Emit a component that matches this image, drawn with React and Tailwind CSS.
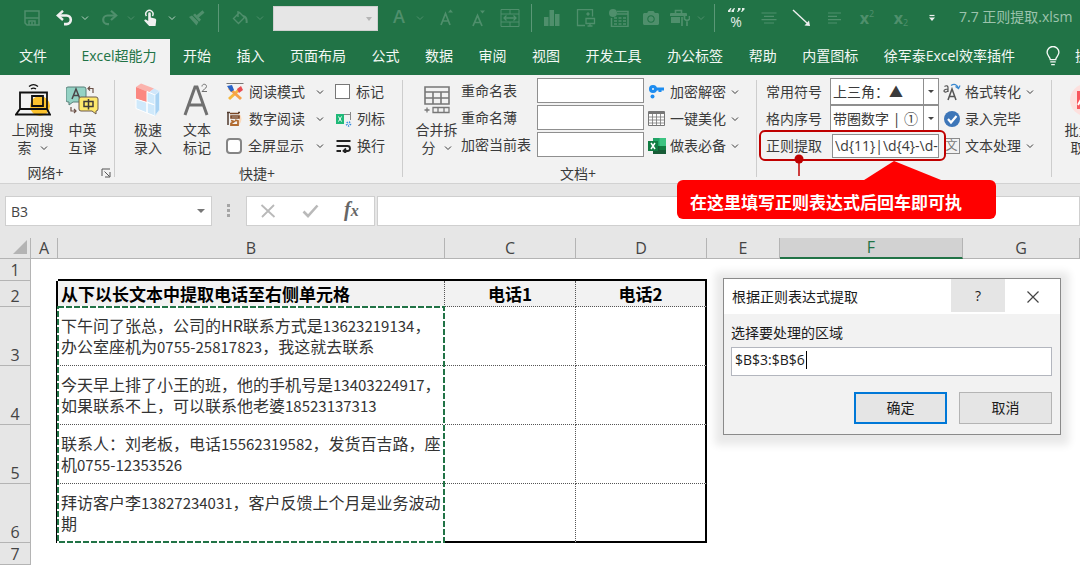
import { Fragment } from "react";
import { FaCamera } from "react-icons/fa";

const TABS = ["开始", "插入", "页面布局", "公式", "数据", "审阅", "视图", "开发工具", "办公标签", "帮助", "内置图标", "徐军泰Excel效率插件"];

const ROWS = [
  { n: 3, lines: ["下午问了张总，公司的HR联系方式是13623219134，", "办公室座机为0755-25817823，我这就去联系"] },
  { n: 4, lines: ["今天早上排了小王的班，他的手机号是13403224917，", "如果联系不上，可以联系他老婆18523137313"] },
  { n: 5, lines: ["联系人：刘老板，电话15562319582，发货百吉路，座", "机0755-12353526"] },
  { n: 6, lines: ["拜访客户李13827234031，客户反馈上个月是业务波动", "期"] },
];

function Chevron({ className = "" }) {
  return (
    <svg viewBox="0 0 8 8" className={`w-2 h-2 shrink-0 ${className}`} fill="none" stroke="currentColor">
      <path d="M1 2.5l3 3 3-3" />
    </svg>
  );
}

function Svg({ w, h, className = "", children }) {
  return (
    <svg viewBox={`0 0 ${w} ${h}`} width={w} height={h} fill="none" stroke="currentColor" className={`shrink-0 ${className}`}>
      {children}
    </svg>
  );
}

/* ---------- quick access bar ---------- */

function QuickButton({ label, className, children }) {
  return (
    <button aria-label={label} className={`flex shrink-0 items-center justify-center ${className}`}>
      {children}
    </button>
  );
}

function QuickAccess() {
  const sep = "w-px h-7 shrink-0 bg-[#5b9877]";
  return (
    <div className="flex h-9 items-center pl-6 text-[#4f8f6c] overflow-hidden">
      <QuickButton label="保存" className="w-4">
        <Svg w={16} h={16}>
          <path d="M1 1h14v14H3l-2-2z" strokeWidth="1.5" />
          <path d="M1 8h14M5 15v-4h6v4M8 12v3" strokeWidth="1.5" />
        </Svg>
      </QuickButton>
      <QuickButton label="撤消" className="w-[18px] ml-4 text-[#f0f0f0]">
        <Svg w={18} h={16}>
          <path d="M3 5.5h7.5a4.3 4.3 0 0 1 0 8.6H8" strokeWidth="2.6" />
          <path d="M7 0.8L1.8 5.5 7 10" strokeWidth="2.4" />
        </Svg>
      </QuickButton>
      <Chevron className="ml-[7px] text-[#b8d2c4]" />
      <QuickButton label="恢复" className="w-[18px] ml-[11px]">
        <Svg w={18} h={16}>
          <path d="M15 5.5H7.5a4.3 4.3 0 0 0 0 8.6H9" strokeWidth="2.2" />
          <path d="M11 0.8l5.2 4.7L11 10" strokeWidth="2.2" />
        </Svg>
      </QuickButton>
      <Chevron className="ml-[9px]" />
      <QuickButton label="触摸/鼠标模式" className="w-4 ml-2 text-[#f0f0f0]">
        <Svg w={16} h={18}>
          <path d="M3.4 7a3.6 3.6 0 1 1 6 0" strokeWidth="1.5" />
          <path d="M5.2 4.5a1.3 1.3 0 0 1 2.6 0v4l4 .9c1 .3 1.6 1 1.4 2L12.5 17H6.2L1.5 12c-.8-1 .6-2 1.6-1.3l2.1 1.3z" fill="currentColor" stroke="none" />
        </Svg>
      </QuickButton>
      <Chevron className="ml-[9px] text-[#b8d2c4]" />
      <QuickButton label="格式刷" className="w-4 ml-[13px]">
        <Svg w={16} h={16}>
          <path d="M0 7l3-1.5L9.5 12l-2 3.5z" fill="currentColor" stroke="none" />
          <path d="M4 5l2-1.5 6 6-1.8 2.2z" fill="currentColor" stroke="none" />
          <path d="M8.5 6.5l6-5" strokeWidth="3" />
        </Svg>
      </QuickButton>
      <span className={`ml-[13px] ${sep}`} />
      <QuickButton label="填充颜色" className="w-4 ml-[13px]">
        <Svg w={16} h={16}>
          <path d="M1.5 8.5l6-6 5 5-6 6zM6 1v6" strokeWidth="1.4" />
          <path d="M11 6c3 .5 4 3 3.6 7" strokeWidth="2" />
        </Svg>
      </QuickButton>
      <Chevron className="ml-2" />
      <div className="relative ml-[9px] h-[25px] w-[105px] shrink-0">
        <select aria-label="字体" className="h-full w-full appearance-none border border-[#d0d0d0] bg-[#e6e6e6]" />
        <svg viewBox="0 0 6 4" className="absolute right-1.5 top-[11px] h-1 w-1.5 pointer-events-none"><path d="M0 0h6L3 4z" fill="#b5b5b5" /></svg>
      </div>
      <QuickButton label="字体颜色" className="w-3 ml-[15px] pb-1 text-lg font-semibold leading-5">A</QuickButton>
      <Chevron className="ml-[11px]" />
      <QuickButton label="增大字号" className="w-4 ml-[14px]">
        <Svg w={16} h={18}>
          <path d="M3 16L7.5 4.5 12 16M4.5 12h6" strokeWidth="1.7" />
          <path d="M10 3.5h5l-2.5-3z" fill="currentColor" stroke="none" />
        </Svg>
      </QuickButton>
      <QuickButton label="减小字号" className="w-4 ml-4">
        <Svg w={16} h={18}>
          <path d="M3 17L7.5 6.5 12 17M4.5 13.5h6" strokeWidth="1.7" />
          <path d="M10 1.5h5l-2.5 3z" fill="currentColor" stroke="none" />
        </Svg>
      </QuickButton>
      <QuickButton label="合并后居中" className="w-5 ml-3.5">
        <Svg w={20} h={18}>
          <path d="M1 .5h18v17H1zM1 5h18M1 13h18M10 .5V5M10 13v4.5" />
          <path d="M4 9h12M6.5 6.5L4 9l2.5 2.5M13.5 6.5L16 9l-2.5 2.5" strokeWidth="1.3" />
        </Svg>
      </QuickButton>
      <span className={`ml-[11px] ${sep}`} />
      <QuickButton label="图表" className="w-[18px] ml-[11px]">
        <Svg w={18} h={18}><path d="M1 8h4.5v9H1zM6.5 1H11v16H6.5zM12 5h4.5v12H12z" fill="currentColor" stroke="none" /></Svg>
      </QuickButton>
      <QuickButton label="对象" className="w-5 ml-[15px]">
        <Svg w={20} h={18}>
          <path d="M9 16.5H1.5V.5h15v7M10 9.5h8.5v5H10zM14 14.5v3M11.5 17h5" strokeWidth="1.3" />
          <circle cx="12" cy="5" r="1.2" fill="currentColor" />
        </Svg>
      </QuickButton>
      <QuickButton label="表格" className="w-5 ml-[13px]">
        <Svg w={20} h={18}>
          <circle cx="4" cy="4" r="4" fill="currentColor" stroke="none" />
          <path d="M8 2.5h11v15H2.5V9M8 5h11" strokeWidth="1.5" />
          <path d="M5 9h12M5 12h12M5 15h12" strokeWidth="1.6" strokeDasharray="3 1.5" />
        </Svg>
      </QuickButton>
      <QuickButton label="照相机" className="w-[18px] ml-[13px]"><FaCamera className="h-4 w-[18px]" /></QuickButton>
      <QuickButton label="工具箱" className="w-5 ml-2.5">
        <Svg w={20} h={18}>
          <path d="M1 4h15a1 1 0 0 1 1 1v2H0V5a1 1 0 0 1 1-1zM1 8h9v6H1z" fill="currentColor" stroke="none" />
          <path d="M5.5 4V1.5h6V4" strokeWidth="1.6" />
          <path d="M12 8v9M17 17v-6M14.5 7v3l2.5 2 2.500-2V7" strokeWidth="1.7" />
        </Svg>
      </QuickButton>
      <Chevron className="ml-[7px]" />
      <span className={`ml-[9px] ${sep}`} />
      <QuickButton label="百分比" className="w-[18px] ml-3 text-[#e4eee8]">
        <span className="relative pt-2 text-sm leading-4">
          %
          <Svg w={18} h={5} className="absolute -left-[3px] top-0.5">
            <path d="M3.500 0L1 2.500V4h2.500V2.500l1-2.500zM7 0L4.500 2.500V4H7V2.500L8 0zM11 0h2.500v1.500L11 4h-1l1-2zM15 0h2.500v1.500L15 4h-1l1-2z" fill="currentColor" stroke="none" />
          </Svg>
        </span>
      </QuickButton>
      <QuickButton label="居中" className="w-4 ml-4">
        <Svg w={16} h={12}><path d="M.5 1h15M3 4.3h10M.5 7.6h15M3 11h10" strokeWidth="1.2" /></Svg>
      </QuickButton>
      <QuickButton label="箭头" className="w-5 ml-[15px] text-[#f0f0f0]">
        <Svg w={20} h={18}>
          <path d="M1 1l14 13" strokeWidth="1.4" />
          <path d="M18 17l-1-5.5-4.500 5z" fill="currentColor" stroke="none" />
        </Svg>
      </QuickButton>
      <QuickButton label="左对齐" className="w-4 ml-[15px]">
        <Svg w={16} h={12}><path d="M1 1h13M1 4.3h9M1 7.6h13M1 11h9" strokeWidth="1.2" /></Svg>
      </QuickButton>
      <QuickButton label="上标" className="w-4 ml-4 text-base font-bold leading-5">
        x<sup className="text-[9px] font-normal">2</sup>
      </QuickButton>
      <QuickButton label="下标" className="w-4 ml-[18px] text-base font-bold leading-5">
        x<sub className="pt-1.5 text-[9px] font-normal">2</sub>
      </QuickButton>
      <QuickButton label="自定义快速访问工具栏" className="w-2 ml-[19px] text-[#f0f0f0]">
        <Svg w={8} h={8}>
          <path d="M1.5 1.5h5" strokeWidth="1.2" />
          <path d="M1 3.5h6L4 7z" fill="currentColor" stroke="none" />
        </Svg>
      </QuickButton>
      <span className="ml-[23px] shrink-0 whitespace-nowrap pb-0.5 text-sm text-[#9cc3ad]">7.7 正则提取.xlsm</span>
    </div>
  );
}

function TabBar() {
  return (
    <nav className="flex h-9 text-sm text-[#f3f8f5] whitespace-nowrap overflow-hidden">
      <button className="w-[70px] shrink-0 pr-1 pb-0.5">文件</button>
      <button className="w-[100px] shrink-0 bg-[#f2f2f2] pb-0.5 pr-0.5 text-[#217346]">Excel超能力</button>
      <div className="flex flex-1 justify-between pl-[13px]">
        {TABS.map((t) => <button key={t} className="pb-0.5">{t}</button>)}
      </div>
      <button className="flex w-[65px] shrink-0 items-center gap-3.5 pl-[30px] pb-0.5">
        <svg viewBox="0 0 16 22" className="h-5 w-4 shrink-0" fill="none" stroke="currentColor" strokeWidth="1.5">
          <path d="M5 15c0-3-3.5-4-3.5-8a6.5 6.5 0 0 1 13 0c0 4-3.5 5-3.5 8zM5 17.5h6M6 20.5h4" />
        </svg>
        操作说明搜索
      </button>
    </nav>
  );
}

/* ---------- ribbon ---------- */

function Group({ label, launcher, className = "", children }) {
  return (
    <section className={`relative flex shrink-0 flex-col pt-[3px] ${className}`}>
      <div className="flex h-[81px]">{children}</div>
      <div className={`mt-1 h-[21px] text-center leading-[21px] ${launcher ? "pr-6" : "pr-1"}`}>{label}</div>
      {launcher && (
        <button aria-label="对话框启动器" className="absolute right-1 bottom-[5px]">
          <Svg w={10} h={10} className="text-[#555]"><path d="M1 8V1h8M3.5 3.5l5 5M9 4v5H4" /></Svg>
        </button>
      )}
      <span className="absolute right-0 top-[5px] bottom-[6px] w-px bg-[#cdcdcd]" />
    </section>
  );
}

function BigButton({ lines, menu, className = "", children }) {
  return (
    <button className={`flex shrink-0 flex-col items-center whitespace-nowrap ${className}`}>
      <span className="flex h-[43px] items-center">{children}</span>
      <span className="leading-[18px]">{lines[0]}</span>
      <span className="flex items-center gap-2 leading-[18px]">{lines[1]}{menu && <Chevron />}</span>
    </button>
  );
}

function RowButton({ text, menu = true, children }) {
  return (
    <button className="flex h-[27px] items-center whitespace-nowrap">
      <span className="mr-[5px] flex w-[17px] shrink-0 justify-center">{children}</span>
      {text}
      {menu && <Chevron className="ml-[5px]" />}
    </button>
  );
}

function ComboBox({ id, value }) {
  return (
    <div className="relative h-[27px] w-[109px] shrink-0 border border-[#8f8f8f] bg-white">
      <select id={id} className="h-full w-full appearance-none pl-0.5 pr-4 text-sm">
        <option>{value}</option>
      </select>
      <span className="pointer-events-none absolute inset-y-0 right-0 flex w-[15px] items-center justify-center border-l border-[#8f8f8f]">
        <svg viewBox="0 0 6 3" className="h-[3px] w-1.5"><path d="M0 0h6L3 3z" fill="#444" /></svg>
      </span>
    </div>
  );
}

// Everything here floats over the ribbon and the formula bar.
function RegexCallout() {
  return (
    <>
      <div className="pointer-events-none absolute -left-[7px] -top-[2px] z-10 h-[31px] w-[187px] rounded-md border-2 border-[#c00000]" />
      <svg viewBox="0 0 320 60" className="pointer-events-none absolute -left-[89px] top-[22px] z-10 h-[60px] w-[320px]">
        <path d="M122 4v18" stroke="#c00000" strokeWidth="1.5" />
        <circle cx="122" cy="5" r="4.5" fill="#c00000" />
        <path d="M184 28l33-21 52 21z" fill="#f00" />
      </svg>
      <div className="absolute -left-[89px] top-12 z-10 h-[39px] w-[319px] rounded-md bg-[#ff0000] pl-[13px] pt-[11px] text-[17px] font-bold leading-6 whitespace-nowrap text-white">
        在这里填写正则表达式后回车即可执
      </div>
    </>
  );
}

function Ribbon() {
  return (
    <div className="flex h-[109px] border-b border-[#d2d2d2] bg-[#f2f2f2] text-sm text-[#3b3b3b]">
      <Group label="网络+" launcher className="w-[115px]">
        <div className="flex gap-3 pl-[11px]">
          <BigButton lines={["上网搜", "索"]} menu className="w-[43px]">
            <Svg w={36} h={34}>
              <circle cx="25" cy="23" r="10" fill="#fcc22d" stroke="none" />
              <g stroke="#111" strokeWidth="1.8">
                <path d="M14 3.5c3-2.5 6-2.5 9 0M16 6c2-1.5 3-1.5 5 0" strokeWidth="1.3" />
                <path d="M5 26V9.5h27V26M17 13h11v10H17zM1 31.5h34L32 26H5z" />
              </g>
            </Svg>
          </BigButton>
          <BigButton lines={["中英", "互译"]} className="w-[33px]">
            <Svg w={34} h={32}>
              <path d="M2 3h16q2 0 2 2v11q0 2-2 2H7l-4 3v-3H2q-2 0-2-2V5q0-2 2-2z" fill="#94d2c4" stroke="#59807a" />
              <path d="M6 15l4-10 4 10M7.5 11.5h5" stroke="#4b4648" strokeWidth="1.5" />
              <path d="M15 13h15q2 0 2 2v10q0 2-2 2v3l-4-3H15q-2 0-2-2V15q0-2 2-2z" fill="#fee86b" stroke="#6c5a4c" />
              <path d="M18 17.5h9v5h-9zM22.5 15v10.5" stroke="#3f3a38" strokeWidth="1.5" />
              <path d="M22 4.5h5V9M24 2.5l-2 2 2 2M10 27H5v-4M8 25l2 2-2 2" stroke="#6c5248" strokeWidth="1.2" />
            </Svg>
          </BigButton>
        </div>
      </Group>

      <Group label="快捷+" className="w-[288px]">
        <BigButton lines={["极速", "录入"]} className="ml-[15px] w-9">
          <Svg w={26} h={34}>
            <path d="M1 4l5-3.5 13 5-5 4z" fill="#fbb3ad" stroke="none" />
            <path d="M14 9.5l5-4 5 2.5-4 5z" fill="#cfe6fa" stroke="none" />
            <path d="M1 4l11 4.5v11L1 16z" fill="#fb8781" stroke="none" />
            <path d="M12 8.5l8 3.5v10l-8-3zM1 16l11 3.5V30L1 25.5zM12 19.5l8 2.5v11l-8-3z" fill="#cfe9fb" stroke="#fff" />
            <path d="M20 12l4.5-4v19L20 33z" fill="#a9d3f3" stroke="#dff0fc" />
          </Svg>
        </BigButton>
        <BigButton lines={["文本", "标记"]} className="ml-[13px] w-9">
          <Svg w={28} h={34} className="text-[#707070]">
            <path d="M2 32L12 4h2l10 28M6 22h15" strokeWidth="3" />
            <path d="M19 3.5c0-3 4.5-3 4.5 0 0 2-4.500 4-4.500 5h5" />
          </Svg>
        </BigButton>
        <div className="ml-[11px] flex w-[98px] flex-col">
          <button className="flex h-[27px] items-center justify-between whitespace-nowrap">
            <Svg w={18} h={18}>
              <path d="M.5 .5h17" stroke="#777" />
              <path d="M3 16L15 5" stroke="#f6b73c" strokeWidth="3" />
              <path d="M3 5l12 11" stroke="#f6a04a" strokeWidth="3" />
              <path d="M1 3l5-1 2 5-3 2z" fill="#2862c8" stroke="none" />
              <path d="M11 6l4-3 2 4-4 3z" fill="#e94d52" stroke="none" />
            </Svg>
            阅读模式
            <Chevron className="ml-1.5" />
          </button>
          <button className="flex h-[27px] items-center justify-between whitespace-nowrap">
            <Svg w={18} h={18}>
              <path d="M13 3q5 6 0 12z" fill="#fbd9ba" stroke="none" />
              <path d="M2 3v12M1 2.5h3M12 2.5h2" stroke="#503a2e" strokeWidth="1.5" />
              <path d="M4 3.5h9M5 6h8v2H5z" stroke="#7a4726" strokeWidth="1.6" />
              <path d="M5 10.5l3 1-3 2V15h7v-4l-3-1" stroke="#b06a30" strokeWidth="1.8" />
            </Svg>
            数字阅读
            <Chevron className="ml-1.5" />
          </button>
          <div className="flex h-[27px] items-center">
            <input id="full" type="checkbox" className="h-4 w-4 shrink-0 appearance-none rounded border-2 border-[#858585] bg-white" />
            <label htmlFor="full" className="ml-1.5 whitespace-nowrap">全屏显示</label>
            <Chevron className="ml-auto" />
          </div>
        </div>
        <div className="ml-[11px] flex flex-col">
          <div className="flex h-[27px] items-center">
            <input id="mark" type="checkbox" className="h-[15px] w-[15px] shrink-0 appearance-none border border-[#777] bg-white" />
            <label htmlFor="mark" className="ml-1.5 whitespace-nowrap">标记</label>
          </div>
          <RowButton text="列标" menu={false}>
            <Svg w={16} h={16}>
              <path d="M0 3h8v10H0z" fill="#1fb978" stroke="none" />
              <path d="M2.5 5.5l3 5M5.5 5.5l-3 5" stroke="#fff" />
              <path d="M8 3.5h7M14.5 1v8" stroke="#888" />
              <circle cx="12.5" cy="13" r="1.8" stroke="#368be0" strokeDasharray="1 1" strokeWidth="2" />
            </Svg>
          </RowButton>
          <RowButton text="换行" menu={false}>
            <Svg w={15} h={14} className="text-[#222]">
              <path d="M.5 2h14M.5 7h11a2.5 2.5 0 0 1 0 5H8M.5 12H5M10 9.500L7.500 12l2.500 2" strokeWidth="1.8" />
            </Svg>
          </RowButton>
        </div>
      </Group>

      <Group label="文档+" className="w-[354px]">
        <BigButton lines={["合并拆", "分"]} menu className="ml-3 w-[43px]">
          <Svg w={26} h={28} className="text-[#777]">
            <path d="M1 1h24v17H1zM1 6h24M1 12h24M9 6v12M17 6v12" strokeWidth="1.6" />
            <path d="M9 21.5h16v5H9zM14 21.5v5M20 21.5v5M.5 24h5M3 21.5v5" strokeWidth="1.3" />
          </Svg>
        </BigButton>
        <div className="ml-[3px] grid grid-cols-[76px_107px]">
          {["重命名表", "重命名薄", "加密当前表"].map((t) => (
            <Fragment key={t}>
              <label htmlFor={t} className="h-[27px] whitespace-nowrap leading-[26px]">{t}</label>
              <input id={t} className="h-[25px] w-full border border-[#8f8f8f] bg-white px-1" />
            </Fragment>
          ))}
        </div>
        <div className="ml-1 flex flex-col">
          <RowButton text="加密解密">
            <Svg w={16} h={16} className="text-[#1d8cf0]">
              <circle cx="4" cy="5" r="2.5" strokeWidth="3" />
              <path d="M6 5h9M11 5v3" strokeWidth="3" />
              <circle cx="3.5" cy="12.5" r="2" fill="currentColor" stroke="none" />
            </Svg>
          </RowButton>
          <RowButton text="一键美化">
            <Svg w={17} h={15} className="text-[#777]">
              <path d="M.5 .5h16v14H.5z" fill="#fff" />
              <path d="M1 2h15" strokeWidth="2" />
              <path d="M.5 6h16M.5 9h16M.5 12h16M4.5 3v12M8.5 3v12M12.5 3v12" strokeWidth="0.8" />
            </Svg>
          </RowButton>
          <RowButton text="做表必备">
            <Svg w={18} h={16}>
              <path d="M5 0h13v16H5z" fill="#21a366" stroke="none" />
              <path d="M11.5 0H18v8h-6.5z" fill="#3cc481" stroke="none" />
              <path d="M5 8h13v8H5z" fill="#185c37" stroke="none" />
              <path d="M11.5 8H18v4h-6.5z" fill="#107c41" stroke="none" />
              <path d="M0 3h10v10H0z" fill="#107c41" stroke="none" />
              <path d="M3 5l4 6M7 5l-4 6" stroke="#fff" strokeWidth="1.5" />
            </Svg>
          </RowButton>
        </div>
      </Group>

      <Group className="w-[295px]">
        <div className="ml-[9px] flex w-[173px] flex-col">
          <div className="flex h-[27px] items-center justify-between">
            <label htmlFor="symbol">常用符号</label>
            <ComboBox id="symbol" value="上三角：▲" />
          </div>
          <div className="flex h-[27px] items-center justify-between">
            <label htmlFor="serial">格内序号</label>
            <ComboBox id="serial" value="带圈数字 | ①" />
          </div>
          <div className="relative flex h-[27px] items-center justify-between">
            <label htmlFor="regex">正则提取</label>
            <input id="regex" defaultValue="\d{11}|\d{4}-\d-" className="h-6 w-[107px] border border-[#8f8f8f] bg-white pl-0.5 text-sm" />
            <RegexCallout />
          </div>
        </div>
        <div className="ml-1 flex flex-col">
          <RowButton text="格式转化">
            <Svg w={18} h={18} className="text-[#555]">
              <path d="M1.5 3.5c2-1.5 3.5-.5 3.5 1V9M5 6C3 6 1 6.5 1 8s3 1.5 4-.5" strokeWidth="1.2" />
              <path d="M5 17l4-11 4 11M6.5 13.5h5" strokeWidth="1.5" />
              <path d="M8 2.5c3-2 6-1 7 2M12.5 3.5l3 2 1.5-3" stroke="#3988d0" strokeWidth="1.3" />
            </Svg>
          </RowButton>
          <RowButton text="录入完毕" menu={false}>
            <Svg w={16} h={16}>
              <circle cx="8" cy="8" r="8" fill="#3d76b8" stroke="none" />
              <path d="M4 8l3 3.5L12.500 5" stroke="#fff" strokeWidth="2.2" />
            </Svg>
          </RowButton>
          <RowButton text="文本处理">
            <span className="flex h-4 w-4 items-center justify-center border border-[#8a8a8a] text-xs text-[#777]">文</span>
          </RowButton>
        </div>
      </Group>

      <div className="flex flex-1 overflow-hidden pl-3 pt-[3px]">
        <BigButton lines={["批量提", "取"]} menu className="w-[43px]">
          <Svg w={34} h={34}>
            <circle cx="17" cy="17" r="16" fill="#fde0de" stroke="none" />
            <path d="M8 8h18v18H8z" fill="#f8575d" stroke="none" />
            <path d="M9 22l5-9 3 9 5-8" stroke="#fff" strokeWidth="2" />
          </Svg>
        </BigButton>
      </div>
    </div>
  );
}

/* ---------- formula bar + sheet ---------- */

function FormulaBar() {
  return (
    <div className="flex h-[54px] items-start bg-[#e6e6e6] pl-[5px] pt-3 text-[#444]">
      <div className="relative h-[30px] w-[207px] shrink-0">
        <input aria-label="名称框" defaultValue="B3" className="h-full w-full border border-[#cfcfcf] bg-white pl-[5px] text-sm" />
        <svg viewBox="0 0 8 4" className="absolute right-[7px] top-[13px] h-1 w-2"><path d="M0 0h8L4 4z" fill="#777" /></svg>
      </div>
      <svg viewBox="0 0 3 14" className="ml-[15px] mt-2 h-3.5 w-[3px]" fill="#a5a5a5"><path d="M0 0h3v3H0zM0 5h3v3H0zM0 10h3v3H0z" /></svg>
      <div className="ml-4 flex h-[30px] w-[129px] shrink-0 items-center border border-[#cfcfcf] bg-white pl-[13px]">
        <button aria-label="取消编辑"><Svg w={16} h={14} className="text-[#b9b9b9]"><path d="M1.5 1l13 12M14 1L2 13" strokeWidth="1.8" /></Svg></button>
        <button aria-label="输入" className="ml-[26px]"><Svg w={17} h={14} className="text-[#b9b9b9]"><path d="M1.5 7.5L6 12l9.5-10.5" strokeWidth="2.6" /></Svg></button>
        <button aria-label="插入函数" className="ml-[25px] font-['Liberation_Serif'] text-xl font-bold italic leading-5 text-[#666]">
          f<span className="text-base">x</span>
        </button>
      </div>
      <input aria-label="编辑栏" className="ml-[2px] h-[30px] min-w-0 flex-1 border border-[#cfcfcf] bg-white px-2" />
    </div>
  );
}

// Digits run slightly smaller than the Han characters around them.
function CellText({ text }) {
  return text.split(/([0-9-]+)/).map((part, i) => (
    i % 2 ? <span key={i} className="text-[15px]">{part}</span> : part
  ));
}

function Sheet() {
  const head = "h-[21px] border-b border-r border-[#b4b4b4] p-0 text-center align-bottom font-normal";
  const num = "border-b border-r border-[#b4b4b4] bg-[#e6e6e6] p-0 text-center align-bottom font-normal font-['Open_Sans'] text-base leading-5 text-[#444]";
  const dotted = "border-b border-r border-dotted border-[#555]";
  return (
    <table className="w-full table-fixed border-separate border-spacing-0 font-['Noto_Sans_CJK_SC',sans-serif] text-base leading-5 text-[#333]">
      <colgroup>
        <col className="w-[31px]" />
        <col className="w-[27px]" />
        <col className="w-[387px]" />
        <col className="w-[131px]" />
        <col className="w-[131px]" />
        <col className="w-[73px]" />
        <col className="w-[183px]" />
        <col />
      </colgroup>
      <thead className="bg-[#e6e6e6] font-['Open_Sans'] text-[#444]">
        <tr>
          <th className={head}>
            <svg viewBox="0 0 14 14" className="mb-1 ml-auto mr-[3px] h-3.5 w-3.5"><path d="M14 0v14H0z" fill="#b4b4b4" /></svg>
          </th>
          {["A", "B", "C", "D", "E"].map((c) => <th key={c} className={head}>{c}</th>)}
          <th className="h-[21px] border-b-2 border-r border-b-[#217346] border-r-[#b4b4b4] bg-[#d2d2d2] p-0 align-bottom font-normal leading-[19px] text-[#217346]">F</th>
          <th className={head}>G</th>
        </tr>
      </thead>
      <tbody>
        <tr className="h-[22px]">
          <th className={num}>1</th>
          <td />
          <td className="border-b-2 border-black" />
          <td className="border-b-2 border-black" />
          <td className="border-b-2 border-black" />
          <td colSpan={3} />
        </tr>
        <tr className="h-[26px] text-[17px] font-bold text-black">
          <th className={num}>2</th>
          <td className="border-r-2 border-black" />
          <td className={`bg-[#f2f2f2] p-0 pl-[3px] ${dotted}`}>从下以长文本中提取电话至右侧单元格</td>
          <td className={`bg-[#f2f2f2] p-0 text-center ${dotted}`}>电话1</td>
          <td className="border-b border-r-2 border-b-[#555] border-r-black [border-bottom-style:dotted] bg-[#f2f2f2] p-0 text-center">电话2</td>
          <td colSpan={3} />
        </tr>
        {ROWS.map((r) => {
          const last = r.n === 6;
          return (
            <tr key={r.n} className="h-[59px]">
              <th className={num}>{r.n}</th>
              <td className="border-r-2 border-black" />
              <td className={`relative whitespace-nowrap p-0 pl-[3px] leading-[21px] ${last ? "border-b-2 border-black" : dotted}`}>
                {r.lines.map((l) => <div key={l}><CellText text={l} /></div>)}
                {r.n === 3 && (
                  <svg className="pointer-events-none absolute -left-px -top-px z-10 h-[238px] w-[389px]" fill="none" strokeWidth="2">
                    <rect x="1" y="1" width="386" height="235" stroke="#fff" />
                    <rect x="1" y="1" width="386" height="235" stroke="#217346" strokeDasharray="6 2" />
                  </svg>
                )}
              </td>
              <td className={last ? "border-b-2 border-r border-b-black border-r-[#555] [border-right-style:dotted]" : dotted} />
              <td className={last ? "border-b-2 border-r-2 border-black" : "border-b border-r-2 border-b-[#555] border-r-black [border-bottom-style:dotted]"} />
              <td colSpan={3} />
            </tr>
          );
        })}
        <tr className="h-[22px]">
          <th className={num}>7</th>
          <td colSpan={7} />
        </tr>
      </tbody>
    </table>
  );
}

function RegexDialog() {
  return (
    <div role="dialog" aria-label="根据正则表达式提取" className="absolute left-[723px] top-[278px] z-20 w-[338px] border border-[#8a8a8a] bg-[#f2f2f2] text-sm text-[#1c1c1c] shadow-[0_2px_8px_8px_rgba(0,0,0,0.09)]">
      <div className="flex h-[35px] items-stretch bg-white pl-2">
        <span className="flex-1 leading-[35px]">根据正则表达式提取</span>
        <button className="mb-0.5 w-[54px] bg-[#e5e5e5]">?</button>
        <button aria-label="关闭" className="flex w-[55px] items-center justify-center">
          <Svg w={12} h={12} className="text-[#444]"><path d="M.5 .5l11 11M11.5 .5l-11 11" strokeWidth="1.2" /></Svg>
        </button>
      </div>
      <div className="pl-[7px] pr-2 pb-2.5 pt-2">
        <label htmlFor="range" className="block leading-[22px]">选择要处理的区域</label>
        <div className="relative mt-[3px]">
          <input id="range" defaultValue="$B$3:$B$6" className="h-[29px] w-full border border-[#b3b6be] bg-white pb-1 pl-[3px]" />
          <span className="absolute left-[75px] top-1 h-[18px] w-px bg-black" />
        </div>
        <div className="mt-4 flex justify-end gap-3">
          <button className="h-8 w-[93px] border-2 border-[#0078d7] bg-[#e5e5e5]">确定</button>
          <button className="h-8 w-[93px] border border-[#b4b4b4] bg-[#e5e5e5]">取消</button>
        </div>
      </div>
    </div>
  );
}

export default function App() {
  return (
    <div className="relative min-h-screen overflow-hidden bg-white font-['Open_Sans','Noto_Sans_CJK_SC',sans-serif]">
      <header className="flex flex-col gap-[3px] bg-[#217346]">
        <QuickAccess />
        <TabBar />
      </header>
      <Ribbon />
      <FormulaBar />
      <Sheet />
      <RegexDialog />
    </div>
  );
}
